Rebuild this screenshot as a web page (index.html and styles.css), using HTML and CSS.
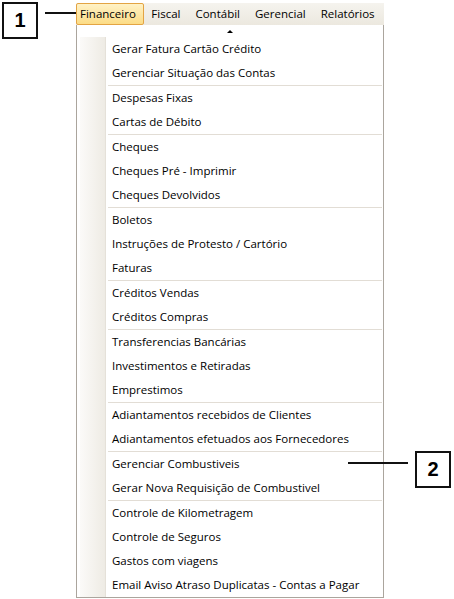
FILE: index.html
```html
<!DOCTYPE html>
<html lang="pt-BR">
<head>
<meta charset="utf-8">
<title>Menu Financeiro</title>
<link rel="stylesheet" href="styles.css">
</head>
<body>
<div class="page">
  <div class="menu">
    <nav class="menubar">
      <span class="mitem active">Financeiro</span>
      <span class="mitem">Fiscal</span>
      <span class="mitem">Contábil</span>
      <span class="mitem">Gerencial</span>
      <span class="mitem">Relatórios</span>
    </nav>
    <div class="dropdown">
      <div class="scroll-up"><span class="arrow"></span></div>
      <ul class="list">
        <li class="item">Gerar Fatura Cartão Crédito</li>
        <li class="item">Gerenciar Situação das Contas</li>
        <li class="sep"></li>
        <li class="item">Despesas Fixas</li>
        <li class="item">Cartas de Débito</li>
        <li class="sep"></li>
        <li class="item">Cheques</li>
        <li class="item">Cheques Pré - Imprimir</li>
        <li class="item">Cheques Devolvidos</li>
        <li class="sep"></li>
        <li class="item">Boletos</li>
        <li class="item">Instruções de Protesto / Cartório</li>
        <li class="item">Faturas</li>
        <li class="sep"></li>
        <li class="item">Créditos Vendas</li>
        <li class="item">Créditos Compras</li>
        <li class="sep"></li>
        <li class="item">Transferencias Bancárias</li>
        <li class="item">Investimentos e Retiradas</li>
        <li class="item">Emprestimos</li>
        <li class="sep"></li>
        <li class="item">Adiantamentos recebidos de Clientes</li>
        <li class="item">Adiantamentos efetuados aos Fornecedores</li>
        <li class="sep"></li>
        <li class="item">Gerenciar Combustiveis</li>
        <li class="item">Gerar Nova Requisição de Combustivel</li>
        <li class="sep"></li>
        <li class="item">Controle de Kilometragem</li>
        <li class="item">Controle de Seguros</li>
        <li class="item">Gastos com viagens</li>
        <li class="item">Email Aviso Atraso Duplicatas - Contas a Pagar</li>
      </ul>
    </div>
  </div>

  <div class="callout c1"><span class="num">1</span></div>
  <div class="leader l1"></div>
  <div class="leader l2"></div>
  <div class="callout c2"><span class="num">2</span></div>
</div>
</body>
</html>
```

FILE: styles.css
```css
* { box-sizing: border-box; }
html, body { margin: 0; padding: 0; background: #fff; }
body {
  font-family: "Open Sans", "Noto Sans", "Liberation Sans", sans-serif;
  font-size: 11.5px;
  color: #000;
}
.page {
  position: relative;
  width: 454px;
  height: 599px;
  padding: 3px 0 0 76px;
}
.menu { width: 308px; }

.menubar {
  display: flex;
  height: 22px;
  align-items: stretch;
  overflow: hidden;
  background: linear-gradient(#f5f3ee, #ece8df);
}
.mitem {
  display: flex;
  align-items: center;
  padding: 0 7.5px;
  line-height: 1;
  white-space: nowrap;
}
.mitem.active {
  padding: 0 7px 0 3px;
  border: 1px solid #e3a443;
  border-radius: 2px;
  background: linear-gradient(#fff2c6, #fcdc86);
}

.dropdown {
  border: 1px solid #aba59d;
  border-top: none;
  background: #fff;
}
.scroll-up {
  height: 12px;
  display: flex;
  justify-content: center;
  align-items: center;
}
.arrow {
  width: 0;
  height: 0;
  border-left: 3px solid transparent;
  border-right: 3px solid transparent;
  border-bottom: 3px solid #000;
}
.list {
  list-style: none;
  margin: 0;
  padding: 0;
  background: linear-gradient(to right, #fff 0 3px, #fbfaf8 3px, #eeebe4 28px, #e5e1d9 28px 29px, #fff 29px);
}
.item {
  height: 24px;
  line-height: 24px;
  padding-left: 35px;
  white-space: nowrap;
}
.sep {
  height: 1px;
  margin: 0 1px 0 31px;
  background: #e2ddd5;
}

.callout {
  position: absolute;
  width: 36px;
  height: 37px;
  border: 2px solid #111;
  background: #fff;
  display: flex;
  align-items: center;
  justify-content: center;
  font-family: "Liberation Sans", Arial, sans-serif;
  font-weight: bold;
  font-size: 20px;
}
.c1 { left: 2px; top: 2px; }
.c2 { left: 415px; top: 451px; }
.leader {
  position: absolute;
  height: 2px;
  background: #111;
}
.l1 { left: 45px; top: 12px; width: 31px; }
.l2 { left: 348px; top: 462px; width: 60px; }
```
